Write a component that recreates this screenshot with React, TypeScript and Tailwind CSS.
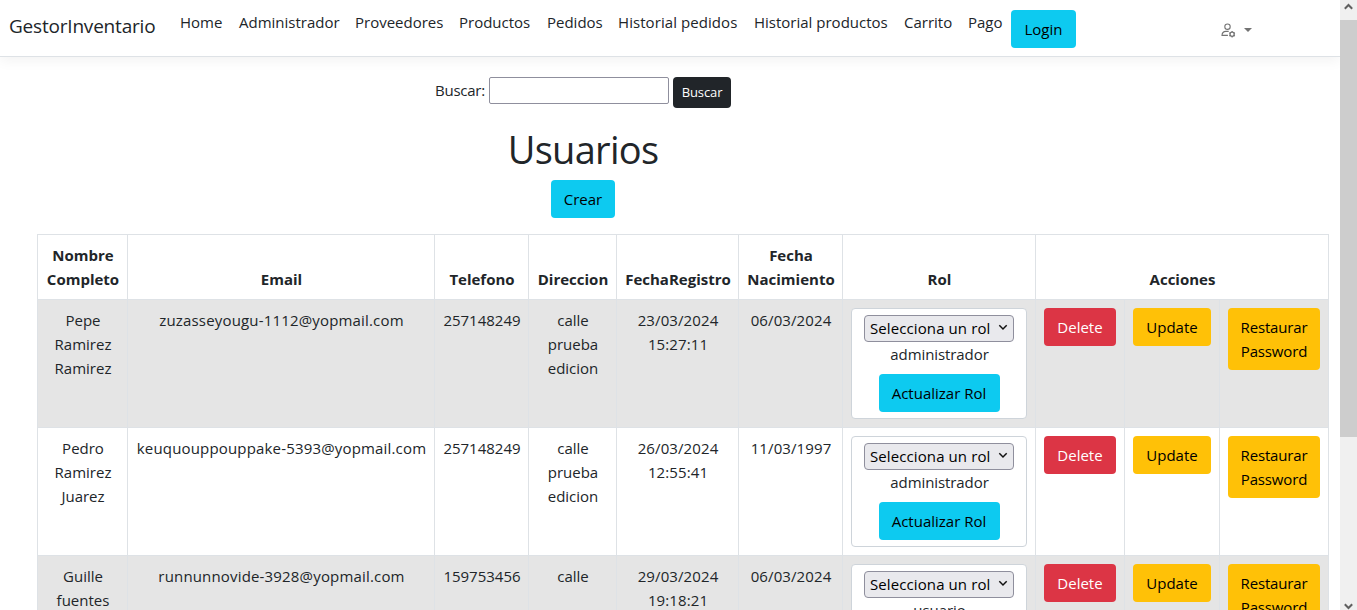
import React from 'react';

const NAV = [
  { label: 'Home', cls: 'w-[43px]' },
  { label: 'Administrador', cls: 'w-[100px]' },
  { label: 'Proveedores', cls: 'w-[88px]' },
  { label: 'Productos', cls: 'w-[72px]' },
  { label: 'Pedidos', cls: 'w-[55px]' },
  { label: 'Historial pedidos', cls: 'w-[120px] tracking-[0.07px]' },
  { label: 'Historial productos', cls: 'w-[134px]' },
  { label: 'Carrito', cls: 'w-[48px]' },
  { label: 'Pago', cls: 'w-[35px]' },
];

const USERS = [
  { name: ['Pepe', 'Ramirez', 'Ramirez'], email: 'zuzasseyougu-1112@yopmail.com', phone: '257148249', address: ['calle', 'prueba', 'edicion'], registered: ['23/03/2024', '15:27:11'], birth: '06/03/2024', role: 'administrador' },
  { name: ['Pedro', 'Ramirez', 'Juarez'], email: 'keuquouppouppake-5393@yopmail.com', phone: '257148249', address: ['calle', 'prueba', 'edicion'], registered: ['26/03/2024', '12:55:41'], birth: '11/03/1997', role: 'administrador' },
  { name: ['Guille', 'fuentes'], email: 'runnunnovide-3928@yopmail.com', phone: '159753456', address: ['calle'], registered: ['29/03/2024', '19:18:21'], birth: '06/03/2024', role: 'usuario' },
];

function Lines({ items }: { items: string[] }) {
  return <>{items.map((t, i) => <div key={i} className="whitespace-nowrap">{t}</div>)}</>;
}

function RoleForm({ role }: { role: string }) {
  return (
    <form className="mx-2 flex h-[111px] flex-col items-center rounded-[4px] border border-[#ced4da] bg-white pt-[6px]">
      <button type="button" className="flex h-[27px] w-[150px] shrink-0 items-center justify-between rounded-[4px] border border-[#8f8f9d] bg-[#e9e9ed] pr-[5px] pb-[2px] pl-[5px] whitespace-nowrap text-black">
        <span className="tracking-[0.1px]">Selecciona un rol</span>
        <svg width="10" height="7" viewBox="0 0 10 7" fill="none" stroke="#111" strokeWidth="1.5"><path d="M1.3 1.3 5 5l3.7-3.7" /></svg>
      </button>
      <span className="pl-px tracking-[-0.08px]">{role}</span>
      <button type="button" className="mt-2 h-[38px] w-[121px] shrink-0 rounded-[4px] bg-[#0dcaf0] text-black">Actualizar Rol</button>
    </form>
  );
}

const BTN = 'block mx-auto rounded-[4px] py-[7px] text-center leading-6 whitespace-nowrap';
const TH = 'border-r border-b border-[#dee2e6] pr-[7px] pl-2 pt-[7px] pb-2 align-bottom font-bold';
const TD = 'border-r border-b border-[#dee2e6] pt-2 align-top';
const TEXT = TD + ' pl-px';

export default function App() {
  return (
    <div className="flex h-[610px] w-[1357px] overflow-hidden bg-white font-['Open_Sans','Noto_Sans',sans-serif] text-[15px] leading-6 text-[#212529]">
      <div className="flex h-full w-[1340px] flex-col">
        <header className="flex h-[57px] shrink-0 border-b border-[#dee2e6] pl-[9px] shadow-[0_4px_12px_rgba(0,0,0,0.05)]">
          <span className="w-[171px] pt-[11px] text-[19px] leading-[30px] tracking-[-0.2px]">GestorInventario</span>
          <nav className="flex gap-4 pt-[10px] whitespace-nowrap">
            {NAV.map((n) => <a key={n.label} className={n.cls}>{n.label}</a>)}
          </nav>
          <button className="mt-[10px] ml-2 h-[38px] w-[65px] rounded-[4px] bg-[#0dcaf0] text-black">Login</button>
          <button aria-label="Cuenta" className="mt-[23px] ml-[145px] flex h-4 items-start">
            <svg width="16" height="16" viewBox="0 0 16 16" fill="none" stroke="#737373" strokeWidth="1.1">
              <circle cx="6.5" cy="3.7" r="2.7" />
              <path d="M6.9 12.4H1c.1-2.5 1.6-3.9 3.9-4h2.8" />
              <circle cx="11.1" cy="11.3" r="2.1" strokeWidth="1.3" />
              <path d="M11.1 8v1.1M11.1 13.5v1.1M8.3 9.7l.9.5M13 12.4l.9.5M8.3 12.9l.9-.5M13 10.2l.9-.5" strokeWidth="1.2" />
            </svg>
            <svg className="mt-[5px] ml-[7px]" width="8" height="4" viewBox="0 0 8 4"><path d="M0 0h8L4 4z" fill="#737373" /></svg>
          </button>
        </header>
        <main className="flex flex-col">
          <form className="mt-5 ml-[435px] flex items-start">
            <label className="mt-[1px] w-[54px] tracking-[-0.25px]">Buscar:</label>
            <input className="h-[27px] w-[180px] rounded-[2px] border border-[#8f8f9d] bg-white" />
            <button type="button" className="ml-1 h-[31px] w-[58px] rounded-[4px] bg-[#212529] pb-[2px] text-[13px] tracking-[-0.1px] text-white">Buscar</button>
          </form>
          <h1 className="mt-[17px] w-[1166px] text-center text-[38px] leading-[48px] tracking-[-0.7px]">Usuarios</h1>
          <button className="mt-[7px] ml-[551px] h-[38px] w-[64px] rounded-[4px] bg-[#0dcaf0] text-black">Crear</button>
          <table className="mt-4 ml-[37px] w-[1292px] table-fixed border-separate border-spacing-0 border-t border-l border-[#dee2e6] text-center">
            <colgroup>
              <col className="w-[90px]" /><col className="w-[307px]" /><col className="w-[94px]" /><col className="w-[88px]" /><col className="w-[122px]" />
              <col className="w-[104px]" /><col className="w-[193px]" /><col className="w-[89px]" /><col className="w-[95px]" /><col className="w-[109px]" />
            </colgroup>
            <thead>
              <tr className="h-[65px]">
                <th className={TH}><Lines items={['Nombre', 'Completo']} /></th>
                <th className={TH}>Email</th><th className={TH}>Telefono</th><th className={TH}>Direccion</th><th className={TH}>FechaRegistro</th>
                <th className={TH}><Lines items={['Fecha', 'Nacimiento']} /></th>
                <th className={TH}>Rol</th><th className={TH} colSpan={3}>Acciones</th>
              </tr>
            </thead>
            <tbody>
              {USERS.map((u) => (
                <tr key={u.email} className="h-[128px] odd:bg-[#e5e5e5]">
                  <td className={TEXT}><Lines items={u.name} /></td>
                  <td className={TEXT + ' tracking-[0.17px]'}>{u.email}</td>
                  <td className={TEXT}>{u.phone}</td>
                  <td className={TEXT}><Lines items={u.address} /></td>
                  <td className={TEXT + ' tracking-[0.1px]'}><Lines items={u.registered} /></td>
                  <td className={TEXT + ' tracking-[0.1px]'}>{u.birth}</td>
                  <td className={TD}><RoleForm role={u.role} /></td>
                  <td className={TD}><button className={BTN + ' w-[72px] bg-[#dc3545] text-white'}>Delete</button></td>
                  <td className={TD}><button className={BTN + ' w-[78px] bg-[#ffc107] text-black'}>Update</button></td>
                  <td className={TD}><button className={BTN + ' w-[92px] bg-[#ffc107] tracking-[-0.15px] text-black'}><Lines items={['Restaurar', 'Password']} /></button></td>
                </tr>
              ))}
            </tbody>
          </table>
        </main>
      </div>
      <aside className="z-10 flex h-full w-[17px] flex-col items-center bg-[#f0f0f0]">
        <div className="flex h-5 shrink-0 pt-[3px]">
          <svg width="9" height="7" viewBox="0 0 9 7" fill="none" stroke="#606060" strokeWidth="2"><path d="M.8 5.8 4.5 2l3.7 3.8" /></svg>
        </div>
        <div className="h-[417px] w-full shrink-0 bg-[#cdcdcd]" />
        <svg className="mt-auto shrink-0" width="9" height="7" viewBox="0 0 9 7" fill="none" stroke="#606060" strokeWidth="2"><path d="M.8 1.2 4.5 5l3.7-3.8" /></svg>
      </aside>
    </div>
  );
}
